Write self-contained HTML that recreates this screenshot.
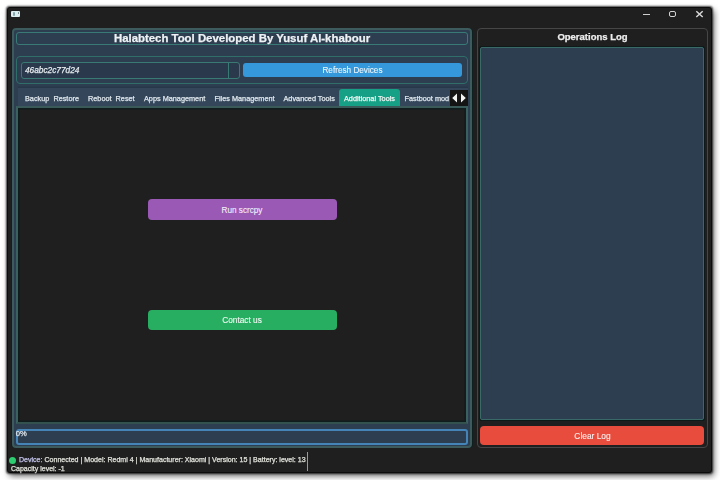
<!DOCTYPE html>
<html><head><meta charset="utf-8">
<style>
*{margin:0;padding:0;box-sizing:border-box}
html,body{width:720px;height:480px;overflow:hidden;background:#ffffff;font-family:"Liberation Sans",sans-serif}
.a{position:absolute}
#win{left:7px;top:6.5px;width:705px;height:466px;background:#1f1f1f;border:1px solid #0c0c0c;border-radius:3px;box-shadow:2px 3px 6px rgba(0,0,0,.6),0 0 2px 0.5px rgba(0,0,0,.7)}
.t{position:absolute;white-space:pre;line-height:1;color:#e8eef2;-webkit-text-stroke:0.25px currentColor}
#lp{left:12px;top:28px;width:460px;height:420px;background:#2c3e50;border:2px solid #3d5a5c;box-shadow:-1px 0 0 #0f2020, 1px 0 0 #0f2020;border-radius:4px}
#title{left:16px;top:32px;width:452px;height:13px;border:1px solid #3a7a76;border-radius:3px}
#dev{left:16px;top:56px;width:452px;height:28px;border:1px solid #2f6e69;border-radius:4px}
#entry{left:21px;top:61.5px;width:219px;height:17px;border:1px solid #3a7a74;border-radius:3px;background:#2a3a4c}
#entrydiv{left:227.5px;top:62px;width:1px;height:16px;background:#3a7a74}
#refresh{left:243px;top:62.5px;width:219px;height:14.5px;background:#3498db;border-radius:3px}
#tabs{left:17.5px;top:87.5px;width:450px;height:18.5px;background:#33465a;box-shadow:0 -1.5px 0 #26384a}
#content{left:16px;top:105.5px;width:452px;height:318.5px;background:#1f1f1f;border:2.4px solid #3a6060;border-top-color:#3a5a5a;border-bottom-color:#33514f;box-shadow:inset 0 0 0 1.6px #111c1c}
#activetab{left:339px;top:89.3px;width:61px;height:17px;background:#16a085;border-radius:3px 3px 0 0}
#arrows{left:450px;top:90px;width:18px;height:16px;background:#141414}
#purple{left:147.5px;top:199px;width:189px;height:20.5px;background:#9b59b6;border-radius:4px}
#green{left:147.5px;top:309.5px;width:189px;height:20px;background:#27ae60;border-radius:4px}
#prog{left:15.5px;top:428.6px;width:452.5px;height:16.2px;border:2px solid #4584b6;border-radius:3px;background:#2c3e50}
#rp{left:477px;top:28px;width:230.5px;height:419.5px;border:1.8px solid #464648;border-radius:4px;background:#1f1f1f}
#log{left:480.3px;top:46.8px;width:224px;height:373.7px;border:1.8px solid #3a6a68;background:#2c3e50;border-radius:2px;box-shadow:0 0 0 1px #0e1919}
#clear{left:480.3px;top:426px;width:224px;height:18.8px;background:#e74c3c;border-radius:4px}
#dot{left:9px;top:456.5px;width:7px;height:7px;border-radius:50%;background:#2ecc71}
#cursor{left:306.5px;top:452px;width:1px;height:19px;background:#9a9a9a}
</style></head><body><div id="root" style="position:absolute;left:0;top:0;width:720px;height:480px;filter:blur(0.35px)">
<div id="win" class="a"></div>
<!-- title bar icon -->
<div class="a" style="left:11px;top:10.7px;width:9px;height:6.6px;background:#dceef0;border-radius:1px"></div>
<div class="a" style="left:12.8px;top:12.2px;width:2.4px;height:4px;background:#86a6ac;border-radius:1px"></div><div class="a" style="left:17.6px;top:12.4px;width:1.2px;height:1.6px;background:#7a9296"></div>
<!-- window controls -->
<div class="a" style="left:642.5px;top:13.8px;width:7px;height:1.5px;background:#cfcfcf"></div>
<div class="a" style="left:669.3px;top:11px;width:6.6px;height:6px;border:1.8px solid #d4d4d4;border-radius:2px"></div>
<svg class="a" style="left:695px;top:10px" width="9" height="8" viewBox="0 0 9 8"><path d="M1.3 1.2 L7.7 7 M7.7 1.2 L1.3 7" stroke="#d8d8d8" stroke-width="1.5"/></svg>

<div id="lp" class="a"></div>
<div id="title" class="a"></div>
<div class="t" style="left:0;width:484px;top:33px;text-align:center;font-weight:bold;font-size:11.4px;color:#eef2f4">Halabtech Tool Developed By Yusuf Al-khabour</div>
<div id="dev" class="a"></div>
<div id="entry" class="a"></div>
<div id="entrydiv" class="a"></div>
<div class="t" style="left:25px;top:66px;font-size:8.3px;font-style:italic;color:#e4eaee">46abc2c77d24</div>
<div id="refresh" class="a"></div>
<div class="t" style="left:243px;width:219px;top:66.8px;text-align:center;font-size:8.2px;color:#eef6fc;-webkit-text-stroke:0.1px currentColor">Refresh Devices</div>

<div id="tabs" class="a"></div>
<div id="activetab" class="a"></div>
<div class="t" style="left:25px;top:94.5px;font-size:7.3px;color:#e0e8ee">Backup  Restore</div>
<div class="t" style="left:88px;top:94.5px;font-size:7.3px;color:#e0e8ee">Reboot  Reset</div>
<div class="t" style="left:144px;top:94.5px;font-size:7.3px;color:#e0e8ee">Apps Management</div>
<div class="t" style="left:214.5px;top:94.5px;font-size:7.3px;color:#e0e8ee">Files Management</div>
<div class="t" style="left:283.5px;top:94.5px;font-size:7.3px;color:#e0e8ee">Advanced Tools</div>
<div class="t" style="left:344px;top:94.5px;font-size:7.3px;color:#f0f6f4">Additional Tools</div>
<div class="t" style="left:404.5px;top:94.5px;font-size:7.3px;color:#e0e8ee">Fastboot mod</div>
<div id="arrows" class="a"></div>
<svg class="a" style="left:450px;top:90px" width="18" height="16" viewBox="0 0 18 16"><path d="M7 3.5 L2.2 8 L7 12.5 Z M11 3.5 L15.8 8 L11 12.5 Z" fill="#f2f2f2"/></svg>

<div id="content" class="a"></div>
<div id="purple" class="a"></div>
<div class="t" style="left:147.5px;width:189px;top:206.5px;text-align:center;font-size:8.2px;color:#f4eef8;-webkit-text-stroke:0.1px currentColor">Run scrcpy</div>
<div id="green" class="a"></div>
<div class="t" style="left:147.5px;width:189px;top:315.8px;text-align:center;font-size:8.3px;color:#eefaf2;-webkit-text-stroke:0.1px currentColor">Contact us</div>

<div id="prog" class="a"></div>
<div class="t" style="left:15.8px;top:430.3px;font-size:7.6px;color:#dfe6ec">0%</div>

<div id="rp" class="a"></div>
<div class="t" style="left:477.5px;width:230px;top:31.6px;text-align:center;font-weight:bold;font-size:9.5px;color:#eeeeee">Operations Log</div>
<div id="log" class="a"></div>
<div id="clear" class="a"></div>
<div class="t" style="left:480.5px;width:224px;top:432px;text-align:center;font-size:8.4px;color:#fbeeee;-webkit-text-stroke:0.1px currentColor">Clear Log</div>

<div id="dot" class="a"></div>
<div class="t" style="left:19px;top:456.3px;font-size:7.05px;color:#e2e2dc"><span style="color:#c4c4ec">Device:</span> Connected | Model: Redmi 4 | Manufacturer: Xiaomi | Version: 15 | Battery: level: 13</div>
<div class="t" style="left:11px;top:464.5px;font-size:7px;color:#e2e2dc">Capacity level: -1</div>
<div id="cursor" class="a"></div>
</div></body></html>
